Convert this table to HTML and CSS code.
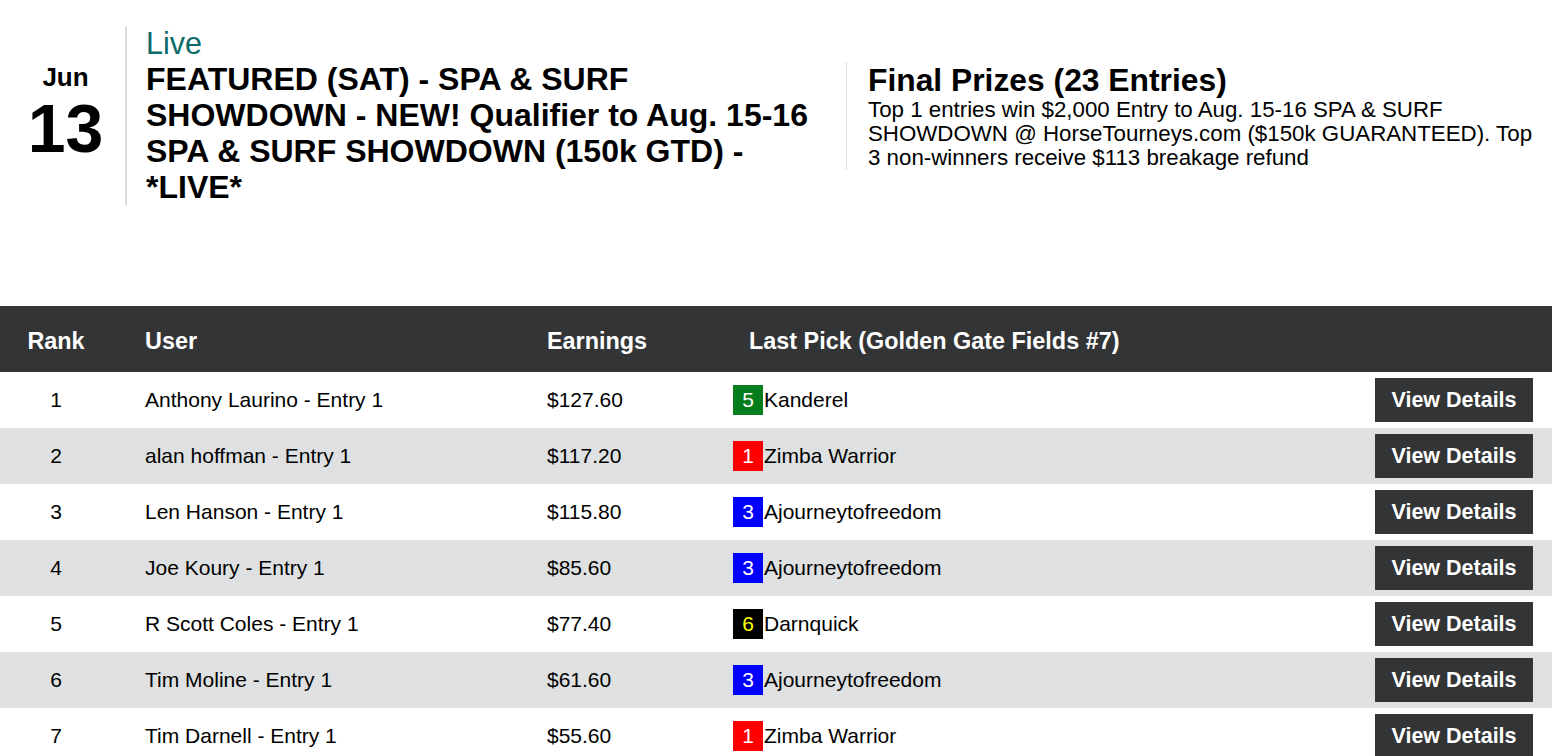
FILE: index.html
```html
<!DOCTYPE html>
<html>
<head>
<meta charset="utf-8">
<link rel="stylesheet" href="styles.css">
</head>
<body>
<header class="event">
  <div class="date">
    <div class="month">Jun</div>
    <div class="day">13</div>
  </div>
  <div class="title-col">
    <div class="status">Live</div>
    <h1 class="title">FEATURED (SAT) - SPA &amp; SURF SHOWDOWN - NEW! Qualifier to Aug. 15-16 SPA &amp; SURF SHOWDOWN (150k GTD) - *LIVE*</h1>
  </div>
  <div class="prize-col">
    <h2 class="prize-title">Final Prizes (23 Entries)</h2>
    <p class="prize-text">Top 1 entries win $2,000 Entry to Aug. 15-16 SPA &amp; SURF SHOWDOWN @ HorseTourneys.com ($150k GUARANTEED). Top 3 non-winners receive $113 breakage refund</p>
  </div>
</header>

<section class="board">
  <div class="row head">
    <div class="c-rank">Rank</div>
    <div class="c-user">User</div>
    <div class="c-earn">Earnings</div>
    <div class="c-pick">Last Pick (Golden Gate Fields #7)</div>
    <div class="c-act"></div>
  </div>
  <div class="row">
    <div class="c-rank">1</div>
    <div class="c-user">Anthony Laurino - Entry 1</div>
    <div class="c-earn">$127.60</div>
    <div class="c-pick"><span class="badge b-green">5</span>Kanderel</div>
    <div class="c-act"><button class="btn">View Details</button></div>
  </div>
  <div class="row alt">
    <div class="c-rank">2</div>
    <div class="c-user">alan hoffman - Entry 1</div>
    <div class="c-earn">$117.20</div>
    <div class="c-pick"><span class="badge b-red">1</span>Zimba Warrior</div>
    <div class="c-act"><button class="btn">View Details</button></div>
  </div>
  <div class="row">
    <div class="c-rank">3</div>
    <div class="c-user">Len Hanson - Entry 1</div>
    <div class="c-earn">$115.80</div>
    <div class="c-pick"><span class="badge b-blue">3</span>Ajourneytofreedom</div>
    <div class="c-act"><button class="btn">View Details</button></div>
  </div>
  <div class="row alt">
    <div class="c-rank">4</div>
    <div class="c-user">Joe Koury - Entry 1</div>
    <div class="c-earn">$85.60</div>
    <div class="c-pick"><span class="badge b-blue">3</span>Ajourneytofreedom</div>
    <div class="c-act"><button class="btn">View Details</button></div>
  </div>
  <div class="row">
    <div class="c-rank">5</div>
    <div class="c-user">R Scott Coles - Entry 1</div>
    <div class="c-earn">$77.40</div>
    <div class="c-pick"><span class="badge b-black">6</span>Darnquick</div>
    <div class="c-act"><button class="btn">View Details</button></div>
  </div>
  <div class="row alt">
    <div class="c-rank">6</div>
    <div class="c-user">Tim Moline - Entry 1</div>
    <div class="c-earn">$61.60</div>
    <div class="c-pick"><span class="badge b-blue">3</span>Ajourneytofreedom</div>
    <div class="c-act"><button class="btn">View Details</button></div>
  </div>
  <div class="row">
    <div class="c-rank">7</div>
    <div class="c-user">Tim Darnell - Entry 1</div>
    <div class="c-earn">$55.60</div>
    <div class="c-pick"><span class="badge b-red">1</span>Zimba Warrior</div>
    <div class="c-act"><button class="btn">View Details</button></div>
  </div>
</section>
</body>
</html>
```

FILE: styles.css
```css
* { box-sizing: border-box; }
html, body { margin: 0; padding: 0; background: #fff; }
body {
  font-family: "Liberation Sans", Arial, sans-serif;
  color: #000;
}

.event {
  display: flex;
  align-items: center;
  padding-top: 26px;
}

.date {
  width: 127px;
  padding-left: 6px;
  padding-bottom: 5px;
  align-self: stretch;
  display: flex;
  flex-direction: column;
  justify-content: center;
  align-items: center;
  border-right: 2px solid #dcdcdc;
  font-weight: bold;
}
.month { font-size: 26px; line-height: 30px; }
.day { font-size: 68px; line-height: 72px; }

.title-col {
  width: 719px;
  padding-left: 19px;
  padding-right: 32px;
}
.status {
  font-size: 30.5px;
  line-height: 35px;
  color: #0c6a68;
}
.title {
  margin: 0;
  font-size: 32px;
  line-height: 36px;
  font-weight: bold;
}

.prize-col {
  flex: 1;
  border-left: 1px solid #dcdcdc;
  padding-left: 21px;
  padding-right: 8px;
}
.prize-title {
  margin: 0;
  font-size: 31.8px;
  line-height: 36px;
  font-weight: bold;
}
.prize-text {
  margin: 0;
  font-size: 22.3px;
  line-height: 24px;
}

.board { margin-top: 101px; }

.row {
  display: grid;
  grid-template-columns: 112px 402px 202px 1fr auto;
  align-items: center;
  height: 56px;
  font-size: 21px;
  background: #fff;
}
.row.alt { background: #dfe0e2; }
.row.head {
  height: 66px;
  padding-top: 4px;
  background: #333436;
  color: #fff;
  font-size: 23.4px;
  font-weight: bold;
}

.c-rank { text-align: center; }
.c-user, .c-earn { padding-left: 33px; }
.c-pick { padding-left: 17px; display: flex; align-items: center; }
.head .c-pick { padding-left: 33px; }
.c-act { padding-right: 19px; }

.badge {
  display: inline-block;
  width: 30px;
  height: 30px;
  line-height: 30px;
  text-align: center;
  color: #fff;
  margin-right: 1px;
}
.b-green { background: #067d1d; }
.b-red { background: #ff0000; }
.b-blue { background: #0000ff; }
.b-black { background: #000; color: #ffff00; }

.btn {
  display: block;
  width: 158px;
  height: 44px;
  border: 0;
  background: #333436;
  color: #fff;
  font-family: "Liberation Sans", Arial, sans-serif;
  font-size: 21.5px;
  font-weight: bold;
  padding: 0;
}
```
